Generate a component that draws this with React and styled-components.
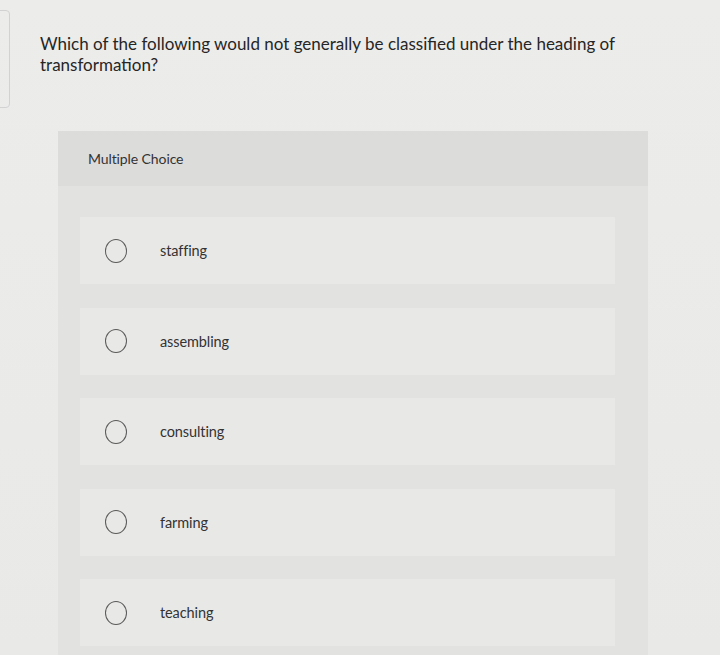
import React from "react";
import styled, { createGlobalStyle } from "styled-components";

const GlobalStyle = createGlobalStyle`
  html, body {
    margin: 0;
    padding: 0;
    background: #ebebea;
  }
  body {
    font-family: Lato, "Open Sans", Arial, sans-serif;
  }
`;

const Page = styled.div`
  position: relative;
  width: 720px;
  height: 655px;
  overflow: hidden;
  background: linear-gradient(180deg, #ececeb 0%, #e9e9e8 100%);
`;

// faint side tab on the left edge
const SideTab = styled.div`
  position: absolute;
  left: -6px;
  top: 10px;
  width: 14px;
  height: 96px;
  border: 1px solid #d2d2d2;
  border-radius: 4px;
`;

const Question = styled.p`
  margin: 0;
  padding: 33px 0 0 40px;
  width: 600px;
  font-size: 17px;
  line-height: 21px;
  color: #262626;
`;

const Panel = styled.section`
  margin: 56px 0 0 58px;
  width: 590px;
  background: #e2e2e1;
  padding-bottom: 20px;
`;

const PanelHeader = styled.div`
  height: 55px;
  display: flex;
  align-items: center;
  padding-left: 30px;
  background: #dcdcdb;
  font-size: 14px;
  letter-spacing: -0.1px;
  color: #333;
`;

const Options = styled.div`
  display: flex;
  flex-direction: column;
  gap: 23.5px;
  padding: 31px 33px 0 22px;
`;

const Option = styled.label`
  height: 67px;
  display: flex;
  align-items: center;
  background: #e8e8e7;
  padding-left: 25px;
  cursor: pointer;
`;

const Radio = styled.span`
  width: 22px;
  height: 24px;
  border: 1.5px solid #5a5a5a;
  border-radius: 50%;
  box-sizing: border-box;
  flex-shrink: 0;
`;

const OptionText = styled.span`
  margin-left: 33px;
  font-size: 14.5px;
  letter-spacing: -0.1px;
  color: #333;
`;

const choices = ["staffing", "assembling", "consulting", "farming", "teaching"];

export default function App() {
  return (
    <Page>
      <GlobalStyle />
      <SideTab />
      <Question>
        Which of the following would not generally be classified under the
        heading of transformation?
      </Question>
      <Panel>
        <PanelHeader>Multiple Choice</PanelHeader>
        <Options>
          {choices.map((c) => (
            <Option key={c}>
              <Radio />
              <OptionText>{c}</OptionText>
            </Option>
          ))}
        </Options>
      </Panel>
    </Page>
  );
}
